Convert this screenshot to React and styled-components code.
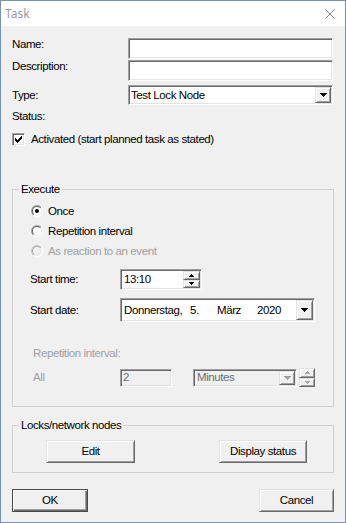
import React, { useId } from 'react';
import styled, { createGlobalStyle, css } from 'styled-components';

const Global = createGlobalStyle`
  html, body { margin: 0; padding: 0; background: #ffffff; }
  body { font-family: "Liberation Sans", Arial, sans-serif; }
  * { box-sizing: border-box; }
`;

const sunken = css`
  border: 1px solid;
  border-color: #a0a0a0 #ffffff #ffffff #a0a0a0;
  box-shadow: inset 1px 1px 0 #696969, inset -1px -1px 0 #e3e3e3;
`;

const raised = css`
  border: 1px solid;
  border-color: #e3e3e3 #696969 #696969 #e3e3e3;
  box-shadow: inset 1px 1px 0 #ffffff, inset -1px -1px 0 #a0a0a0;
  background: #f0f0f0;
`;

const Window = styled.div`
  width: 346px;
  height: 523px;
  border: 1px solid #7592b8;
  display: flex;
  flex-direction: column;
  background: #f0f0f0;
  font-family: "Liberation Sans", Arial, sans-serif;
  font-size: 11.5px;
  letter-spacing: -0.4px;
  line-height: 13px;
  color: #000;
`;

const TitleBar = styled.div`
  height: 25px;
  flex: none;
  background: #ffffff;
  display: flex;
  align-items: center;
  justify-content: space-between;
  padding: 0 10px 0 4px;
`;

const Title = styled.span`
  font-family: "Noto Sans", "Open Sans", sans-serif;
  font-size: 12px;
  letter-spacing: 0;
  color: #999999;
`;

const Body = styled.div`
  flex: 1;
  display: flex;
  flex-direction: column;
  padding: 12px 11px 11px 11px;
`;

const FieldRow = styled.div`
  display: flex;
  align-items: ${p => (p.$center ? 'center' : 'flex-start')};
  margin-top: ${p => p.$mt || 0}px;
`;

const FieldLabel = styled.span`
  width: ${p => p.$w}px;
  flex: none;
  padding-left: ${p => p.$pl || 0}px;
  color: ${p => (p.$disabled ? '#a0a0a0' : '#000')};
`;

const Box = styled.div`
  ${sunken};
  flex: none;
  width: ${p => p.$w}px;
  height: ${p => p.$h}px;
  margin-left: ${p => p.$ml || 0}px;
  background: ${p => (p.$disabled ? '#f0f0f0' : '#ffffff')};
  color: ${p => (p.$disabled ? '#6d6d6d' : '#000')};
  display: flex;
  align-items: stretch;
  padding: 1px;
`;

const BoxText = styled.span`
  flex: 1;
  display: flex;
  align-items: center;
  padding-left: ${p => p.$pl}px;
  white-space: nowrap;
`;

const DropButton = styled.div`
  ${raised};
  flex: none;
  width: ${p => p.$w}px;
  display: flex;
  align-items: center;
  justify-content: center;
`;

const SpinStack = styled.div`
  flex: none;
  width: ${p => p.$w}px;
  display: flex;
  flex-direction: column;
  margin-left: ${p => p.$ml || 0}px;
  height: ${p => (p.$h ? `${p.$h}px` : 'auto')};
`;

const SpinHalf = styled.div`
  ${raised};
  flex: 1;
  display: flex;
  align-items: center;
  justify-content: center;
`;

const CheckRow = styled.label`
  display: flex;
  align-items: center;
  gap: 6px;
  height: 13px;
  margin-top: 10px;
`;

const CheckBox = styled.span`
  ${sunken};
  width: 13px;
  height: 13px;
  background: #ffffff;
  display: flex;
  align-items: center;
  justify-content: center;
`;

const Group = styled.fieldset`
  margin: ${p => p.$mt || 0}px 0 0 0;
  padding: 0;
  min-width: 0;
  border: 1px solid #d0d0d0;
`;

const Legend = styled.legend`
  margin-left: 6px;
  padding: 0 2px;
  line-height: 13px;
`;

const ExecuteContent = styled.div`
  padding: 5px 0 19px 17px;
  display: flex;
  flex-direction: column;
`;

const RadioRow = styled.label`
  height: 20px;
  display: flex;
  align-items: center;
  gap: 5px;
  padding-left: 1px;
  color: ${p => (p.$disabled ? '#a0a0a0' : '#000')};
`;

const SubLabel = styled.div`
  margin-top: ${p => p.$mt}px;
  padding-left: 3px;
  color: #a0a0a0;
`;

const DateSeg = styled.span`
  width: ${p => (p.$w ? `${p.$w}px` : 'auto')};
  flex: none;
`;

const LocksContent = styled.div`
  display: flex;
  justify-content: space-between;
  padding: 8px 26px 9px 33px;
`;

const Button = styled.button`
  ${raised};
  width: ${p => p.$w}px;
  height: 23px;
  padding: 0;
  font: inherit;
  letter-spacing: inherit;
  color: #000;
  ${p =>
    p.$default &&
    css`
      border-color: #4a4a4a;
      box-shadow: inset 1px 1px 0 #ffffff, inset -1px -1px 0 #696969, inset -2px -2px 0 #a0a0a0;
    `}
`;

const Footer = styled.div`
  display: flex;
  justify-content: space-between;
  margin-top: 16px;
`;

const DownArrow = ({ color = '#000' }) => (
  <svg width="7" height="4" viewBox="0 0 7 4" shapeRendering="crispEdges">
    <path d="M0 0h7v1h-1v1h-1v1h-1v1h-1v-1h-1v-1h-1v-1h-1z" fill={color} />
  </svg>
);

const SmallArrow = ({ up, color = '#000' }) => (
  <svg width="5" height="3" viewBox="0 0 5 3" shapeRendering="crispEdges">
    {up ? (
      <path d="M2 0h1v1h1v1h1v1h-5v-1h1v-1h1z" fill={color} />
    ) : (
      <path d="M0 0h5v1h-1v1h-1v1h-1v-1h-1v-1h-1z" fill={color} />
    )}
  </svg>
);

const CheckMark = () => (
  <svg width="7" height="7" viewBox="0 0 7 7" shapeRendering="crispEdges">
    <path
      d="M6 0h1v3h-1v1h-1v1h-1v1h-1v1h-1v-1h-1v-1h-1v-3h1v1h1v1h1v-1h1v-1h1z"
      fill="#000"
    />
  </svg>
);

const Radio = ({ checked, disabled }) => {
  const id = useId().replace(/:/g, '');
  const o1 = disabled ? '#c8c8c8' : '#a0a0a0';
  const i1 = disabled ? '#b0b0b0' : '#696969';
  return (
    <svg width="12" height="12" viewBox="0 0 12 12" style={{ flex: 'none' }}>
      <defs>
        <linearGradient id={`o${id}`} x1="0" y1="0" x2="1" y2="1">
          <stop offset="0.5" stopColor={o1} />
          <stop offset="0.5" stopColor="#ffffff" />
        </linearGradient>
        <linearGradient id={`i${id}`} x1="0" y1="0" x2="1" y2="1">
          <stop offset="0.5" stopColor={i1} />
          <stop offset="0.5" stopColor="#e3e3e3" />
        </linearGradient>
      </defs>
      <circle cx="6" cy="6" r="6" fill={`url(#o${id})`} />
      <circle cx="6" cy="6" r="5" fill={`url(#i${id})`} />
      <circle cx="6" cy="6" r="4" fill={disabled ? '#f0f0f0' : '#ffffff'} />
      {checked && <circle cx="6" cy="6" r="2" fill="#000" />}
    </svg>
  );
};

const CloseIcon = () => (
  <svg width="10" height="10" viewBox="0 0 10 10">
    <path d="M0.5 0.5L9.5 9.5M9.5 0.5L0.5 9.5" stroke="#8a8a8a" strokeWidth="1" />
  </svg>
);

export default function App() {
  return (
    <>
      <Global />
      <Window>
        <TitleBar>
          <Title>Task</Title>
          <CloseIcon />
        </TitleBar>
        <Body>
          <FieldRow>
            <FieldLabel $w={116}>Name:</FieldLabel>
            <Box $w={205} $h={21} />
          </FieldRow>
          <FieldRow $mt={1}>
            <FieldLabel $w={116}>Description:</FieldLabel>
            <Box $w={205} $h={21} />
          </FieldRow>
          <FieldRow $mt={4} $center>
            <FieldLabel $w={116}>Type:</FieldLabel>
            <Box $w={205} $h={20}>
              <BoxText $pl={1}>Test Lock Node</BoxText>
              <DropButton $w={16}>
                <DownArrow />
              </DropButton>
            </Box>
          </FieldRow>
          <FieldRow $mt={5}>
            <FieldLabel $w={116}>Status:</FieldLabel>
          </FieldRow>
          <CheckRow>
            <CheckBox>
              <CheckMark />
            </CheckBox>
            Activated (start planned task as stated)
          </CheckRow>

          <Group $mt={37}>
            <Legend>Execute</Legend>
            <ExecuteContent>
              <RadioRow>
                <Radio checked />
                Once
              </RadioRow>
              <RadioRow>
                <Radio />
                Repetition interval
              </RadioRow>
              <RadioRow $disabled>
                <Radio disabled />
                As reaction to an event
              </RadioRow>

              <FieldRow $mt={8} $center>
                <FieldLabel $w={90}>Start time:</FieldLabel>
                <Box $w={82} $h={21}>
                  <BoxText $pl={2}>13:10</BoxText>
                  <SpinStack $w={17}>
                    <SpinHalf>
                      <SmallArrow up />
                    </SpinHalf>
                    <SpinHalf>
                      <SmallArrow />
                    </SpinHalf>
                  </SpinStack>
                </Box>
              </FieldRow>

              <FieldRow $mt={8} $center>
                <FieldLabel $w={90}>Start date:</FieldLabel>
                <Box $w={195} $h={24}>
                  <BoxText $pl={2}>
                    <DateSeg $w={66}>Donnerstag,</DateSeg>
                    <DateSeg $w={27}>5.</DateSeg>
                    <DateSeg $w={40}>März</DateSeg>
                    <DateSeg>2020</DateSeg>
                  </BoxText>
                  <DropButton $w={17}>
                    <DownArrow />
                  </DropButton>
                </Box>
              </FieldRow>

              <SubLabel $mt={25}>Repetition interval:</SubLabel>

              <FieldRow $mt={8} $center>
                <FieldLabel $w={90} $pl={3} $disabled>
                  All
                </FieldLabel>
                <Box $w={52} $h={18} $disabled>
                  <BoxText $pl={1}>2</BoxText>
                </Box>
                <Box $w={104} $h={18} $ml={21} $disabled>
                  <BoxText $pl={2}>Minutes</BoxText>
                  <DropButton $w={16}>
                    <DownArrow color="#a0a0a0" />
                  </DropButton>
                </Box>
                <SpinStack $w={16} $ml={2} $h={19}>
                  <SpinHalf>
                    <SmallArrow up color="#a0a0a0" />
                  </SpinHalf>
                  <SpinHalf>
                    <SmallArrow color="#a0a0a0" />
                  </SpinHalf>
                </SpinStack>
              </FieldRow>
            </ExecuteContent>
          </Group>

          <Group $mt={12}>
            <Legend>Locks/network nodes</Legend>
            <LocksContent>
              <Button $w={89}>Edit</Button>
              <Button $w={88}>Display status</Button>
            </LocksContent>
          </Group>

          <Footer>
            <Button $w={76} $default>
              OK
            </Button>
            <Button $w={75}>Cancel</Button>
          </Footer>
        </Body>
      </Window>
    </>
  );
}
